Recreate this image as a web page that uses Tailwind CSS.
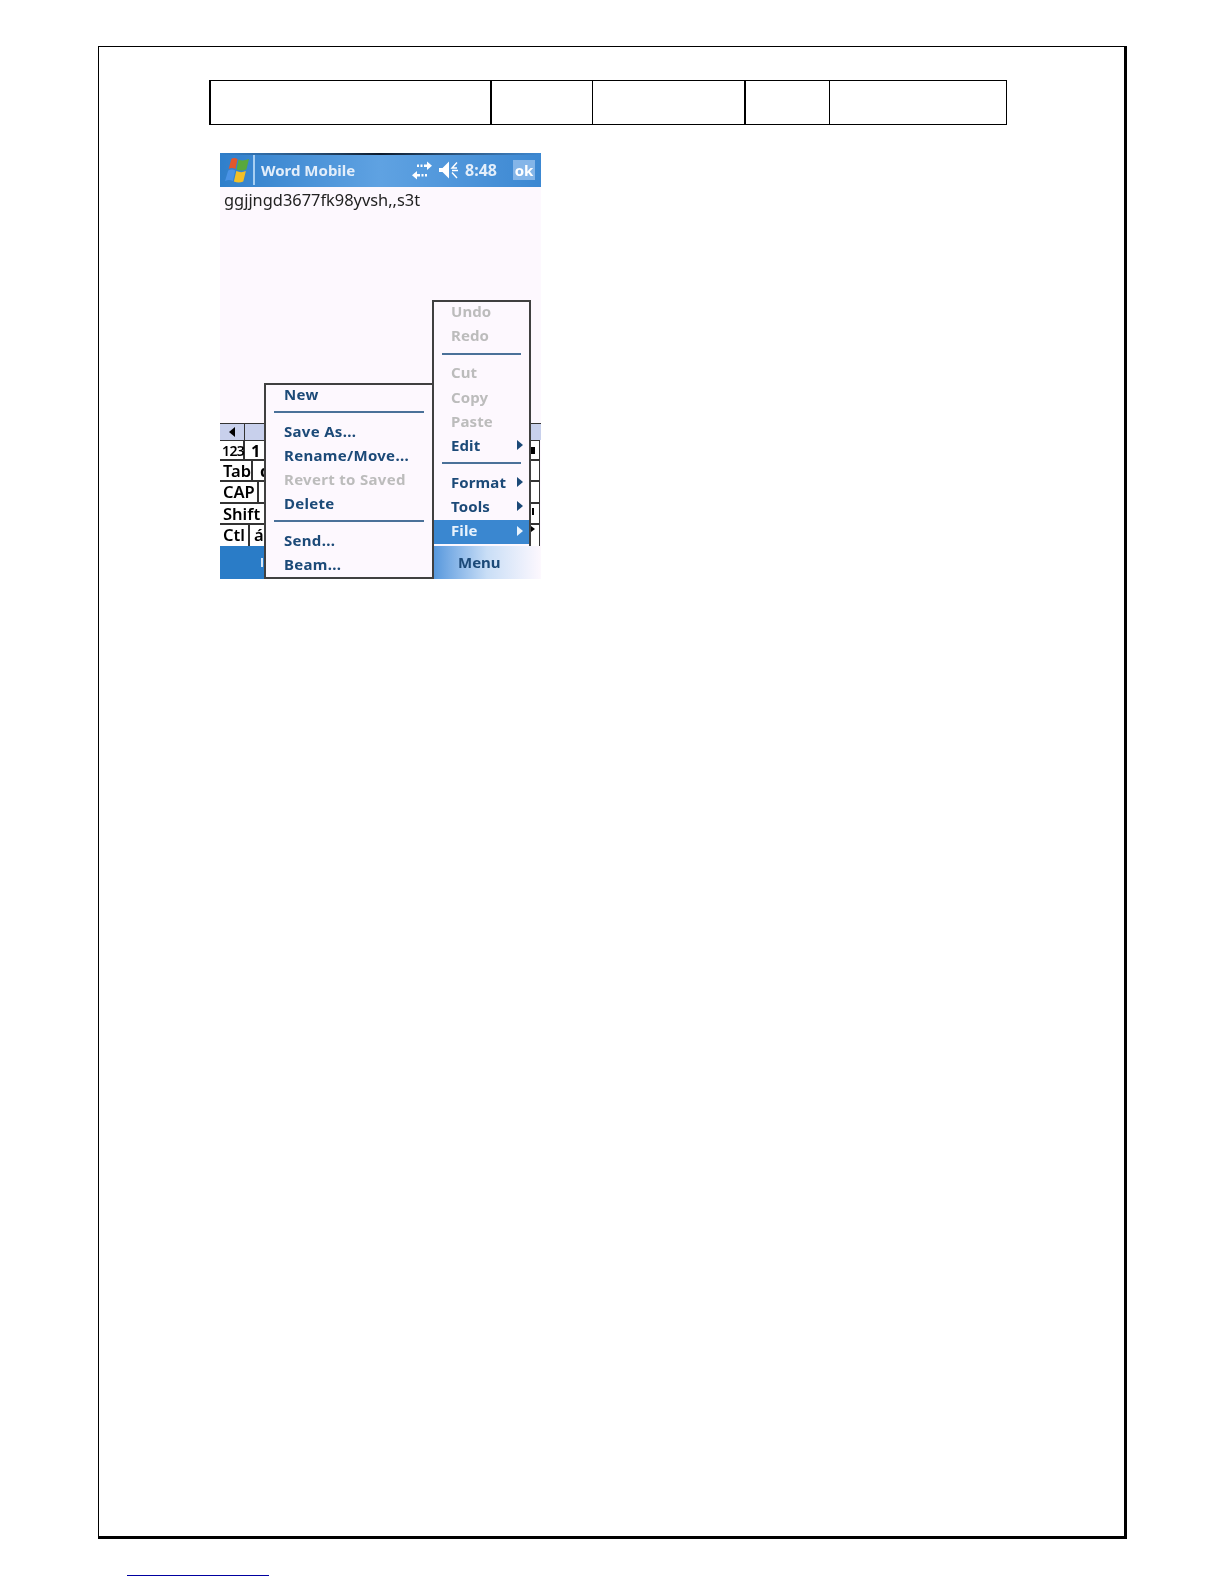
<!doctype html>
<html lang="en">
<head>
<meta charset="UTF-8" />
<script src="https://cdn.jsdelivr.net/npm/@tailwindcss/browser@4"></script>
<title>Word Mobile</title>
</head>
<body class="bg-white font-['Noto_Sans',sans-serif]">

<div class="pt-[46px] pl-[98px]">
  <!-- page frame -->
  <div class="w-[1029px] h-[1493px] border-t border-l border-r-[3px] border-b-[3px] border-black pt-[33px] pl-[110px]">

    <!-- empty header table -->
    <div class="flex w-[798px] h-[45px] border-y border-r border-l-2 border-black">
      <div class="w-[281px] border-r-2 border-black"></div>
      <div class="w-[101px] border-r border-black"></div>
      <div class="w-[153px] border-r-2 border-black"></div>
      <div class="w-[84px] border-r border-black"></div>
      <div class="flex-1"></div>
    </div>

    <!-- phone screen -->
    <div class="relative mt-[28px] ml-[11px] w-[321px] h-[426px] bg-[#fdf8fe] overflow-hidden blur-[0.35px]">

      <!-- title bar -->
      <div class="relative flex items-center h-[34px] pl-[4px] bg-gradient-to-r from-[#2f7fcb] via-[#5fa2e2] to-[#3c88d2]">
        <div class="absolute top-0 left-0 right-0 h-[2px] bg-gradient-to-r from-transparent via-[#0b1a2c] to-transparent"></div>
        <svg width="25" height="26" viewBox="0 0 24 26" preserveAspectRatio="none" class="shrink-0">
          <path d="M7 2 C9 0.500 11 1 13 2 L11 12 C8.500 10.800 6.500 10.800 4.500 12 Z" fill="#e2572b"/>
          <path d="M14 2.500 C17 4 20 3.500 24 2 L21.500 12.500 C18 14 15 13.800 12 12.500 Z" fill="#59a83c"/>
          <path d="M4 13.500 C6.500 12.300 8.500 12.300 10.800 13.500 L8.500 24 C6 22.800 3.500 22.800 1 24 Z" fill="#4a93e6"/>
          <path d="M11.800 14 C15 15.500 18 15.500 21 14 L18.500 24.500 C15.500 26 12.500 25.800 9.500 24.500 Z" fill="#f3bf27"/>
        </svg>
        <div class="w-[2px] h-[30px] ml-[4px] bg-[#a8cff2]"></div>
        <span class="ml-[6px] w-[93px] whitespace-nowrap text-[15px] font-bold text-[#e3eefa]">Word Mobile</span>

        <svg width="20" height="19" viewBox="0 0 20 19" class="ml-[58px] shrink-0" fill="#ffffff">
          <path d="M5 3.500h2v2.500H5zM8.500 3.500h2v2.500h-2zM12 3.500h3V0.500L20 4.800 15 9V6h-3z"/>
          <path d="M0 14.200 5 10v3h3v2.500H5v3zM9.500 13h2v2.500h-2zM13 13h2v2.500h-2z"/>
        </svg>
        <svg width="20" height="20" viewBox="0 0 20 20" class="ml-[7px] shrink-0">
          <path d="M0 8h3.500L10 1.500v17L3.500 12H0z" fill="#ffffff"/>
          <path d="M18 2.500 13 8h5M13 10.500h6M13 12.500 18 18" fill="none" stroke="#ffffff" stroke-width="1.400"/>
        </svg>
        <span class="ml-[6px] w-[33px] whitespace-nowrap text-[16px] font-bold text-[#e3eefa]">8:48</span>
        <div class="ml-[15px] w-[22px] h-[20px] flex items-center justify-center bg-[#84b5e8] text-[15px] font-bold text-white">ok</div>
      </div>

      <!-- document -->
      <div class="h-[236px] pl-[4px] pt-[2px] text-[16.400px] leading-[22px] text-[#222222]">ggjjngd3677fk98yvsh,,s3t</div>

      <!-- input panel -->
      <div class="flex h-[17px] bg-[#c8d0ec] border-t border-[#333333]">
        <div class="flex items-center justify-center w-[25px] border-r border-[#333333]">
          <div class="w-0 h-0 border-y-[5px] border-y-transparent border-r-[6px] border-r-black"></div>
        </div>
      </div>
      <div class="h-[106px] mr-[1px] bg-white border-t border-r border-[#333333] text-[16.500px] leading-[20px] font-semibold text-black">
        <div class="flex h-[20px] border-b-2 border-[#333333]">
          <div class="w-[25px] pl-[2px] border-r-2 border-[#333333] text-[14px] tracking-[-0.6px] whitespace-nowrap">123</div>
          <div class="pl-[6px] font-bold">1</div>
          <div class="ml-auto mr-[4px] mt-[6px] w-[4px] h-[7px] bg-black"></div>
        </div>
        <div class="flex h-[21px] border-b-2 border-[#333333]">
          <div class="w-[33px] pl-[3px] border-r-2 border-[#333333]">Tab</div>
          <div class="pl-[7px] font-bold">q</div>
        </div>
        <div class="flex h-[22px] border-b-2 border-[#333333]">
          <div class="w-[39px] pl-[3px] border-r-2 border-[#333333]">CAP</div>
        </div>
        <div class="flex h-[21px] border-b-2 border-[#333333]">
          <div class="pl-[3px]">Shift</div>
          <div class="ml-auto mr-[5px] mt-[4px] w-[2px] h-[7px] bg-black"></div>
        </div>
        <div class="flex h-[21px]">
          <div class="w-[30px] pl-[3px] border-r-2 border-[#333333]">Ctl</div>
          <div class="pl-[4px]">á</div>
          <div class="ml-auto mr-[4px] mt-[1px] w-0 h-0 border-y-[3px] border-y-transparent border-l-[4px] border-l-black"></div>
        </div>
      </div>

      <!-- bottom bar -->
      <div class="flex h-[33px] bg-[#2a7cc7]">
        <div class="ml-auto flex items-center w-[108px] pl-[25px] bg-gradient-to-r from-[#5597dc] via-[#c9def6] to-[#fdf8fe] text-[15px] font-bold text-[#1c4a78]">Menu</div>
      </div>
      <div class="absolute left-[41px] top-[405px] w-[2px] h-[9px] bg-[#d8e8f8]"></div>

      <!-- Edit menu -->
      <div class="absolute left-[212px] top-[147px] w-[99px] h-[246px] bg-[#fdf8fe] border-2 border-b-0 border-[#404040] text-[15px] font-bold leading-[21px] tracking-[0.1px] text-[#1c4a78]">
        <div class="pl-[17px] h-[23.200px] leading-[19px] text-[#bcbcbc]">Undo</div>
        <div class="pl-[17px] h-[24.200px] text-[#bcbcbc]">Redo</div>
        <div class="h-[13px] px-[8px] pt-[4px]"><div class="h-[2px] bg-[#4a7199]"></div></div>
        <div class="pl-[17px] h-[24.200px] text-[#bcbcbc]">Cut</div>
        <div class="pl-[17px] h-[24.200px] text-[#bcbcbc]">Copy</div>
        <div class="pl-[17px] h-[24.200px] text-[#bcbcbc]">Paste</div>
        <div class="flex items-center justify-between pl-[17px] pr-[6px] pb-[4px] h-[24.200px]">Edit<span class="w-0 h-0 border-y-[5px] border-y-transparent border-l-[6px] border-l-[#1c4a78]"></span></div>
        <div class="h-[12px] px-[8px] pt-[3px]"><div class="h-[2px] bg-[#4a7199]"></div></div>
        <div class="flex items-center justify-between pl-[17px] pr-[6px] pb-[2px] h-[24.200px]">Format<span class="w-0 h-0 border-y-[5px] border-y-transparent border-l-[6px] border-l-[#1c4a78]"></span></div>
        <div class="flex items-center justify-between pl-[17px] pr-[6px] pb-[2px] h-[24.200px]">Tools<span class="w-0 h-0 border-y-[5px] border-y-transparent border-l-[6px] border-l-[#1c4a78]"></span></div>
        <div class="flex items-center justify-between pl-[17px] pr-[6px] pb-[2px] h-[24.200px] bg-[#3a87d0] text-[#e8f2fc]">File<span class="w-0 h-0 border-y-[5px] border-y-transparent border-l-[6px] border-l-[#e8f2fc]"></span></div>
      </div>

      <!-- File submenu -->
      <div class="absolute left-[44px] top-[230px] w-[170px] h-[196px] bg-[#fdf8fe] border-2 border-[#404040] text-[15px] font-bold leading-[21px] tracking-[0.3px] text-[#1c4a78]">
        <div class="pl-[18px] h-[23.200px] leading-[19px]">New</div>
        <div class="h-[13px] px-[8px] pt-[3px]"><div class="h-[2px] bg-[#4a7199]"></div></div>
        <div class="pl-[18px] h-[24px]">Save As...</div>
        <div class="pl-[18px] h-[24px]">Rename/Move...</div>
        <div class="pl-[18px] h-[24px] text-[#bcbcbc]">Revert to Saved</div>
        <div class="pl-[18px] h-[24px]">Delete</div>
        <div class="h-[13px] px-[8px] pt-[3px]"><div class="h-[2px] bg-[#4a7199]"></div></div>
        <div class="pl-[18px] h-[24px]">Send...</div>
        <div class="pl-[18px] h-[24px]">Beam...</div>
      </div>
    </div>
  </div>

  <!-- footnote rule -->
  <div class="mt-[36px] ml-[29px] w-[142px] h-px bg-[#0000a0]"></div>
</div>

</body>
</html>
